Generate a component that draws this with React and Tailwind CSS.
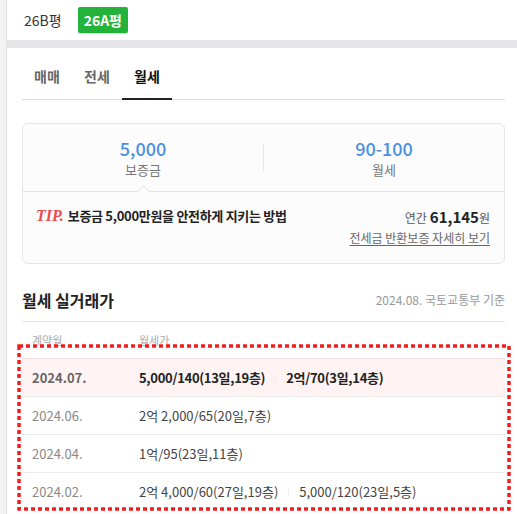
import React from "react";

const F = { fontFamily: '"Noto Sans CJK KR", "Noto Sans", sans-serif' };

function Row({ date, values, bold, pink }) {
  return (
    <div
      className={`flex items-center h-[38px] border-t ${pink ? "bg-[#fff3f3] border-[#f6dede]" : "border-[#ececec]"}`}
    >
      <div className={`w-[117px] pl-[10px] text-[13px] ${bold ? "font-bold text-[#666]" : "text-[#888]"}`}>{date}</div>
      <div className="flex items-center">
        {values.map((v, i) => (
          <React.Fragment key={i}>
            {i > 0 && <span className={`mx-[10px] w-px h-[10px] ${pink ? "bg-[#fbeaea]" : "bg-[#eeeeee]"}`} />}
            <span className={`text-[13px] ${bold ? "font-bold tracking-[-0.3px] text-[#222]" : "text-[#444]"}`}>{v}</span>
          </React.Fragment>
        ))}
      </div>
    </div>
  );
}

export default function App() {
  return (
    <div className="flex w-[517px] h-[514px] overflow-hidden bg-white" style={F}>
      <div className="w-[7px] shrink-0 bg-[#f3f3f3] border-r border-[#e2e2e2]" />
      <div className="flex-1 relative">
        <div className="h-[40px] flex items-center pl-[17px] gap-[16px]">
          <span className="text-[14px] text-[#333]">26B평</span>
          <span className="h-[26px] px-[6px] flex items-center rounded-[2px] bg-[#23b33b] text-white text-[14px] font-bold shadow-[0_1px_1px_rgba(0,0,0,0.15)]">26A평</span>
        </div>
        <div className="h-[8px] bg-[#e6e6e8]" />
        <div className="pl-[15px] pr-[12px]">
          <div className="mt-[12px] flex border-b border-[#dddddd]">
            <div className="w-[50px] pt-[6px] pb-[12px] text-center text-[14px] font-bold text-[#666]">매매</div>
            <div className="w-[50px] pt-[6px] pb-[12px] text-center text-[14px] font-bold text-[#666]">전세</div>
            <div className="w-[50px] pt-[6px] pb-[10px] text-center text-[14px] font-bold text-[#111] border-b-2 border-[#222] -mb-px">월세</div>
          </div>

          <div className="mt-[23px] h-[141px] rounded-[6px] border border-[#e6e6e6] bg-[#fcfcfd]">
            <div className="relative flex h-[68px] border-b border-[#e4e4e4]">
              <div className="flex-1 flex flex-col items-center pt-[12px]">
                <span className="text-[18px] leading-[24px] font-medium text-[#4a90e2]">5,000</span>
                <span className="text-[13px] leading-[20px] text-[#777]">보증금</span>
              </div>
              <div className="w-px bg-[#e8e8e8] my-[20px] h-[28px]" />
              <div className="flex-1 flex flex-col items-center pt-[12px]">
                <span className="text-[18px] leading-[24px] font-medium text-[#4a90e2]">90-100</span>
                <span className="text-[13px] leading-[20px] text-[#777]">월세</span>
              </div>
              <div className="absolute left-[116px] bottom-[-5px] w-[9px] h-[9px] rotate-45 bg-[#fcfcfd] border-l border-t border-[#e4e4e4]" />
            </div>
            <div className="flex justify-between pl-[13px] pr-[14px] pt-[14px]">
              <div className="flex items-center h-[20px]">
                <span className="text-[16px] font-bold italic text-[#ee4b4b] mr-[4px]" style={{ fontFamily: '"Liberation Serif", serif' }}>TIP.</span>
                <span className="text-[13px] font-bold tracking-[-0.3px] text-[#222]">보증금 5,000만원을 안전하게 지키는 방법</span>
              </div>
              <div className="flex flex-col items-end">
                <div className="flex items-baseline h-[20px]">
                  <span className="text-[12px] text-[#555] mr-[3px]">연간</span>
                  <span className="text-[15px] font-bold text-[#222]">61,145</span>
                  <span className="text-[12px] text-[#555]">원</span>
                </div>
                <span className="mt-[3px] text-[12px] text-[#666] underline underline-offset-2">전세금 반환보증 자세히 보기</span>
              </div>
            </div>
          </div>

          <div className="mt-[24px] flex items-center justify-between pb-[9px] border-b border-[#e5e5e5]">
            <span className="text-[16px] font-bold text-[#222]">월세 실거래가</span>
            <span className="text-[12px] text-[#999]">2024.08. 국토교통부 기준</span>
          </div>
          <div className="flex items-center h-[36px] text-[11px] text-[#aaa]">
            <div className="w-[117px] pl-[10px]">계약월</div>
            <div>월세가</div>
          </div>
          <Row date="2024.07." values={["5,000/140(13일,19층)", "2억/70(3일,14층)"]} bold pink />
          <Row date="2024.06." values={["2억 2,000/65(20일,7층)"]} />
          <Row date="2024.04." values={["1억/95(23일,11층)"]} />
          <Row date="2024.02." values={["2억 4,000/60(27일,19층)", "5,000/120(23일,5층)"]} />
        </div>
        <svg className="absolute left-[10px] top-[344px]" width="494" height="167" viewBox="0 0 494 167">
          <rect x="2" y="2" width="490" height="163" fill="none" stroke="#f21d1d" strokeWidth="3.5" strokeDasharray="4 3" />
        </svg>
      </div>
    </div>
  );
}
